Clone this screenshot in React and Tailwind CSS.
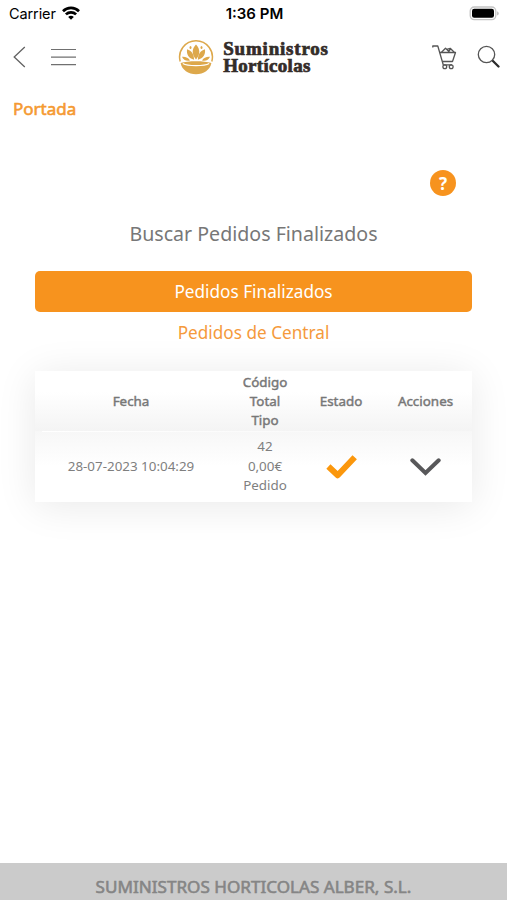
const orders = [
    { date: "28-07-2023 10:04:29", code: "42", total: "0,00€", type: "Pedido" },
]

function StatusBar() {
    return (
        <div className="h-7 grid grid-cols-3 items-center pl-[9px] pr-[7px] font-['Inter','Liberation_Sans',sans-serif] text-black">
            <div className="flex items-center gap-[6px]">
                <span className="text-[14.5px] leading-none tracking-[-0.1px]">Carrier</span>
                <svg className="w-[18px] h-[14px] -mt-[2px]" viewBox="0 0 18 14" fill="none" stroke="currentColor" strokeWidth="2.7">
                    <path d="M1 5.2a11.5 11.5 0 0 1 16 0" />
                    <path d="M3.9 8.4a7.3 7.3 0 0 1 10.2 0" />
                    <path d="M9 13.8 6.2 11a3.9 3.9 0 0 1 5.6 0z" fill="currentColor" stroke="none" />
                </svg>
            </div>
            <span className="-mt-px text-center text-[15px] leading-none font-semibold">1:36 PM</span>
            <svg className="justify-self-end w-[31px] h-[15px] -mt-[2px]" viewBox="0 0 31 15">
                <rect x="1.2" y="1" width="25.6" height="12.6" rx="4" fill="#fff" stroke="#c4c4c4" strokeWidth="1.3" />
                <rect x="3" y="2.8" width="22" height="9" rx="2.2" fill="#000" />
                <path d="M28.2 5.2c2 .8 2 3.6 0 4.4z" fill="#b5b5b5" />
            </svg>
        </div>
    )
}

function Logo() {
    return (
        <div className="flex items-center gap-[9px] mr-[6px]">
            <svg className="w-[36px] h-[36px]" viewBox="0 0 36 36">
                <path d="M2.2 22.5A16.4 16.4 0 1 1 33.8 22.5" fill="none" stroke="#dda84b" strokeWidth="1.5" />
                <g fill="#dda84b">
                    <path d="M18 5.5c4.4 4.5 4.4 10 0 15c-4.4-5-4.4-10.5 0-15z" />
                    <path d="M9 10.200c4.800 1.500 7 5 7.100 10.500c-5.400-1.500-7.700-5-7.100-10.500z" />
                    <path d="M27 10.200c-4.800 1.500-7 5-7.100 10.500c5.400-1.500 7.700-5 7.100-10.500z" />
                    <path d="M4 17.800c3.500-.3 6.300.8 8 3.700c-3.800.8-6.600-.5-8-3.700z" />
                    <path d="M32 17.800c-3.500-.3-6.300.8-8 3.700c3.800.8 6.600-.5 8-3.700z" />
                    <ellipse cx="12.5" cy="8.5" rx="1" ry="1.5" />
                    <ellipse cx="23.5" cy="8.5" rx="1" ry="1.5" />
                    <path d="M2.6 24c7-2.3 23.8-2.3 30.8 0c-1.3 6.8-7.7 11.3-15.4 11.3S3.9 30.8 2.6 24z" />
                </g>
                <path d="M4.8 24.5c5 2.8 21.4 2.8 26.4 0" fill="none" stroke="#fff" strokeWidth="1.2" />
            </svg>
            <div className="flex flex-col font-['Liberation_Serif',serif] font-bold text-[19px] leading-[17px] text-[#332c29] [-webkit-text-stroke:0.7px_#332c29]">
                <span className="tracking-[0.8px]">Suministros</span>
                <span className="tracking-[0.3px]">Hortícolas</span>
            </div>
        </div>
    )
}

function CartIcon() {
    return (
        <svg className="w-[25px] h-[26px]" viewBox="0 0 25 26" fill="none" stroke="#555" strokeWidth="1.3" strokeLinejoin="round">
            <path d="M.8 3.5V2H5.8L11.3 21" />
            <path d="M7.7 8.5H23.5L20.5 17.5H10.3" />
            <path d="M9.5 8.3 13.5 4.3l4.5 4.2M14.7 5.3l3.5-1 4 4M16 8.3l2.5-3.3" />
            <circle cx="12.8" cy="22.8" r="1.9" />
            <circle cx="19.2" cy="22.8" r="1.9" />
            <path d="M11.3 20.9h8.7" />
        </svg>
    )
}

function Header() {
    return (
        <header className="h-[58px] grid grid-cols-[1fr_auto_1fr] items-center pl-[13px] pr-[7px]">
            <div className="flex items-center gap-[25px]">
                <svg className="w-[13px] h-[22px]" viewBox="0 0 13 22" fill="none" stroke="#626262" strokeWidth="1.3">
                    <path d="M11.8 1 1.2 11l10.6 10" />
                </svg>
                <svg className="w-[25px] h-[18px]" viewBox="0 0 25 18" stroke="#707070" strokeWidth="1.2">
                    <path d="M0 1.5h25M0 9.2h25M0 16.6h25" />
                </svg>
            </div>
            <Logo />
            <div className="flex items-center justify-end gap-[20px]">
                <CartIcon />
                <svg className="w-[23px] h-[24px]" viewBox="0 0 23 24" fill="none" stroke="#555">
                    <circle cx="9.5" cy="9.5" r="8.2" strokeWidth="1.3" />
                    <path d="m15 15 2.5 2.5" strokeWidth="1.3" />
                    <path d="m16.2 16.2 5.3 5.3" stroke="#2c2c2c" strokeWidth="2.3" strokeLinecap="round" />
                </svg>
            </div>
        </header>
    )
}

function OrdersTable() {
    return (
        <div className="mt-[26px] h-[131px] bg-white shadow-[0_4px_38px_rgba(0,0,0,0.09)] text-center text-[13.4px] text-[#7f7f7f]">
            {/* Head */}
            <div className="h-[60px] grid grid-cols-[192px_76px_76px_1fr] items-center leading-[19px] text-[#777] [-webkit-text-stroke:0.45px_#777] bg-linear-to-b from-white from-35% to-[#f4f4f4]">
                <span>Fecha</span>
                <span>
                    Código<br />Total<br />Tipo
                </span>
                <span>Estado</span>
                <span>Acciones</span>
            </div>
            {/* Rows */}
            {orders.map((order) => (
                <div key={order.code} className="h-[71px] bg-linear-to-b from-[#f7f7f7] to-white to-50%">
                    <div className="h-px ml-[7px] bg-linear-to-r from-white to-transparent" />
                    <div className="h-[69px] grid grid-cols-[192px_76px_76px_1fr] items-center leading-[19.5px]">
                        <span>{order.date}</span>
                        <span>
                            {order.code}<br />{order.total}<br />{order.type}
                        </span>
                        <svg className="justify-self-center w-[31px] h-[26px]" viewBox="0 0 31 26" fill="none" stroke="#fb970c" strokeWidth="6" strokeLinejoin="round">
                            <path d="M2.4 12.5 11.7 21.3 28.7 3.2" />
                        </svg>
                        <svg className="justify-self-center w-[31px] h-[18px]" viewBox="0 0 31 18" fill="none" stroke="#58585a" strokeWidth="4" strokeLinecap="round">
                            <path d="m2.3 2.3 13.2 12.7L28.7 2.3" />
                        </svg>
                    </div>
                </div>
            ))}
        </div>
    )
}

export default function App() {
    return (
        <div className="w-full h-[900px] flex flex-col overflow-hidden bg-white font-['Noto_Sans',sans-serif]">
            <StatusBar />
            <Header />
            <main className="flex-1">
                <a href="#" className="block w-fit ml-[13px] mt-[11px] text-[17px] leading-6 text-[#f59a32] [-webkit-text-stroke:0.6px_#f59a32]">
                    Portada
                </a>
                <div className="px-[35px] pt-[49px]">
                    <div className="flex justify-end pr-[16px]">
                        <button className="w-[26px] h-[26px] rounded-full bg-[#f7931e] text-white text-[17px] leading-none font-bold">?</button>
                    </div>
                    <h1 className="mt-[24px] text-center text-[19.6px] leading-7 text-[#777]">Buscar Pedidos Finalizados</h1>
                    <button className="mt-[23px] block w-full h-[41px] pt-px rounded-[5px] bg-[#f7931e] text-white text-[17.2px]">
                        Pedidos Finalizados
                    </button>
                    <a href="#" className="mt-[9px] block text-center text-[17.2px] leading-6 text-[#f59a3c]">Pedidos de Central</a>
                    <OrdersTable />
                </div>
            </main>
            <footer className="h-[37px] pt-[12px] bg-[#cbcbcb] text-center text-[17.1px] leading-6 text-[#858585] [-webkit-text-stroke:0.6px_#858585]">
                SUMINISTROS HORTICOLAS ALBER, S.L.
            </footer>
        </div>
    )
}
